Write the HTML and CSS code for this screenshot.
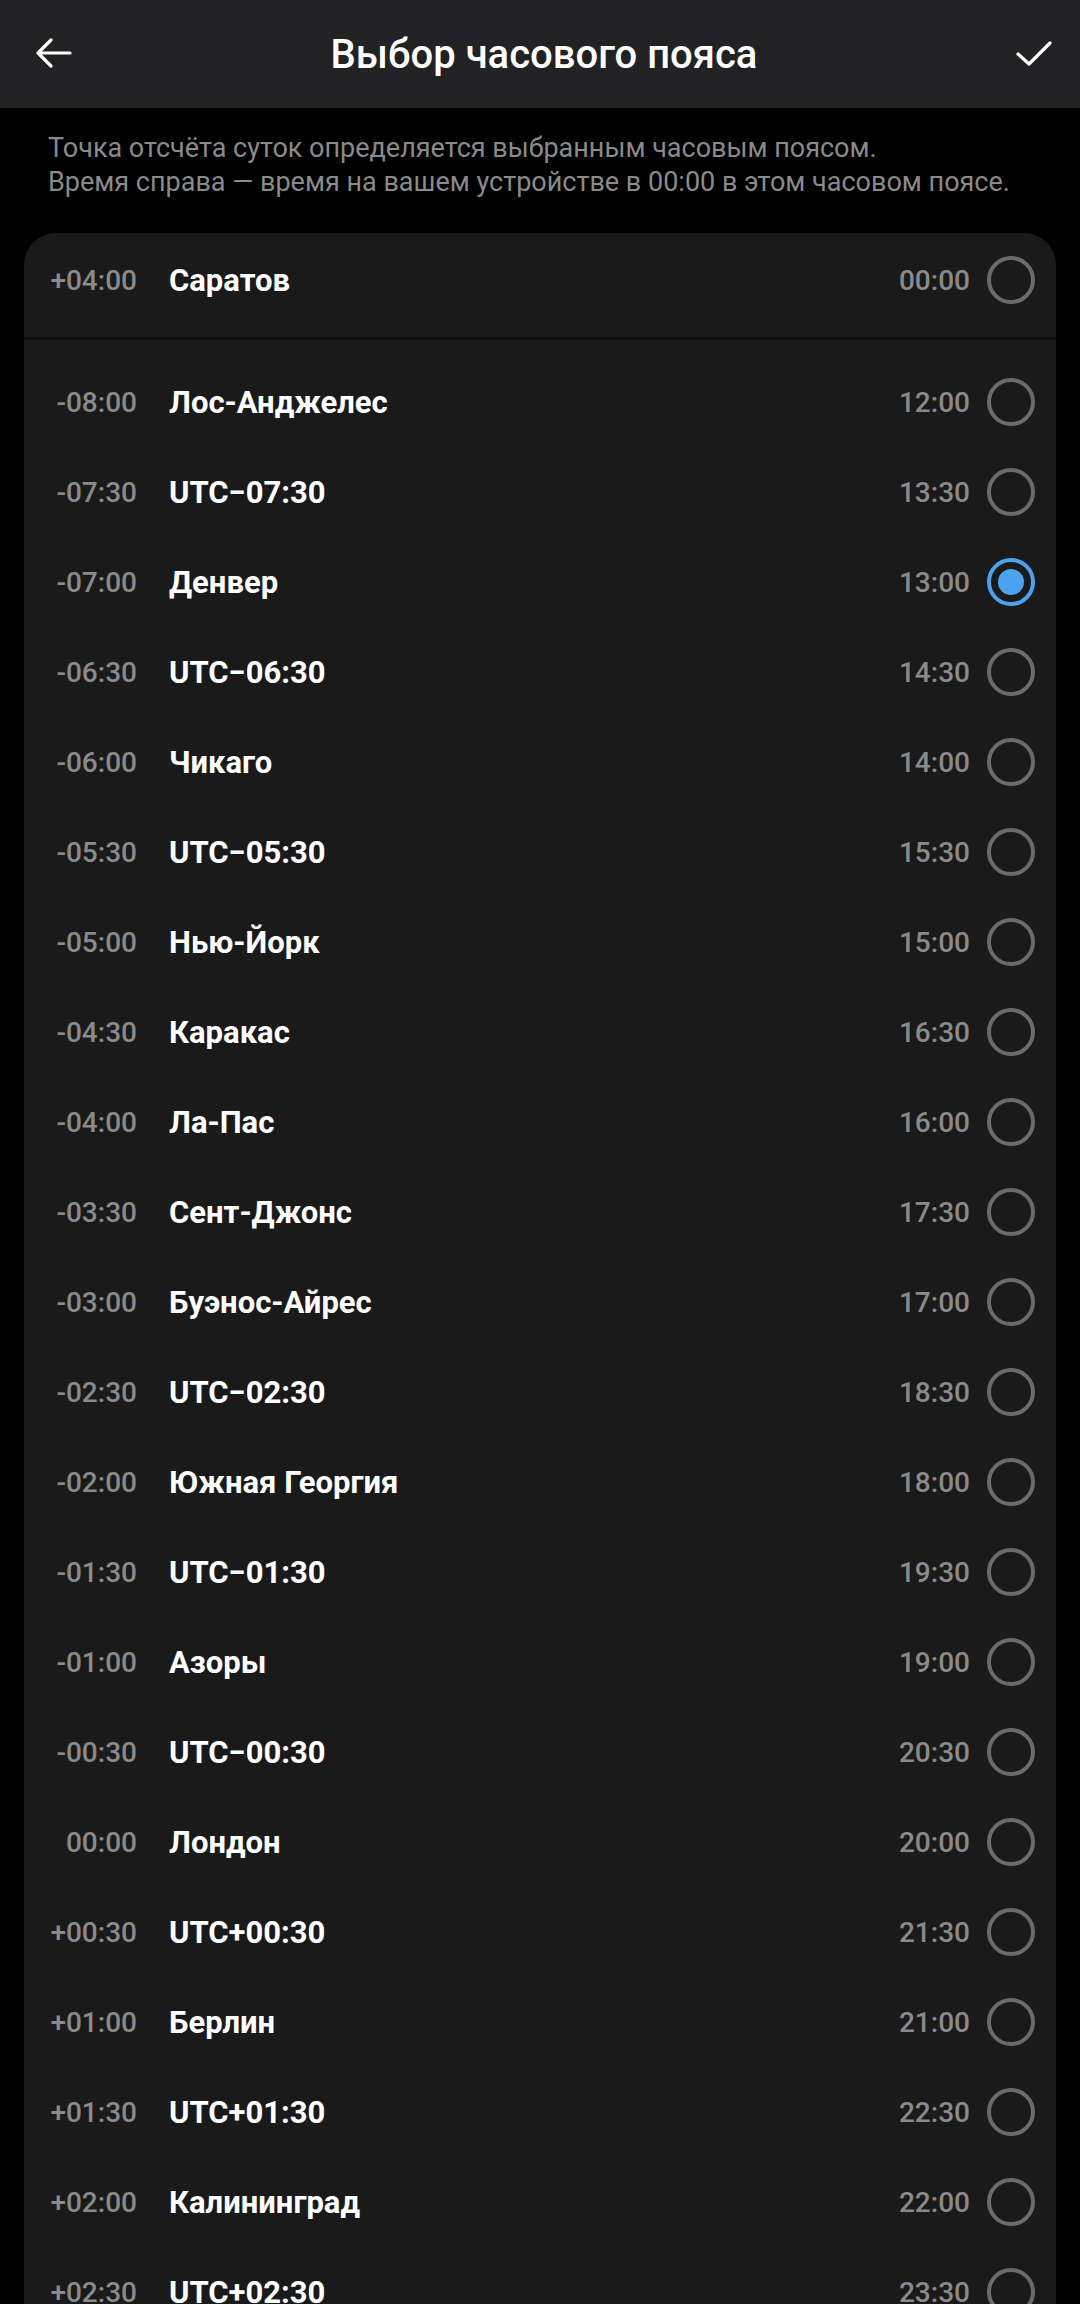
FILE: index.html
```html
<!DOCTYPE html>
<html lang="ru">
<head>
    <meta charset="UTF-8">
    <meta name="viewport" content="width=device-width, initial-scale=1">
    <title>Выбор часового пояса</title>
    <link rel="stylesheet" href="styles.css">
</head>
<body>
    <header class="topbar">
        <button class="icon-btn" aria-label="Назад">
            <svg width="40" height="40" viewBox="0 0 40 40"><path d="M36 20H4M17 7L4 20l13 13" fill="none" stroke="#fff" stroke-width="3.2" stroke-linecap="round" stroke-linejoin="round"/></svg>
        </button>
        <h1>Выбор часового пояса</h1>
        <button class="icon-btn" aria-label="Готово">
            <svg width="40" height="40" viewBox="0 0 40 40"><path d="M4 21l11 10L36 10" fill="none" stroke="#fff" stroke-width="3.2" stroke-linecap="round" stroke-linejoin="round"/></svg>
        </button>
    </header>

    <p class="hint">Точка отсчёта суток определяется выбранным часовым поясом.<br>Время справа — время на вашем устройстве в 00:00 в этом часовом поясе.</p>

    <div class="card">
        <div class="group" id="current"></div>
        <div class="divider"></div>
        <div class="group" id="zones"></div>
    </div>

    <script>
        const current = [
            { offset: "+04:00", name: "Саратов", time: "00:00" }
        ];

        const zones = [
            { offset: "-08:00", name: "Лос-Анджелес", time: "12:00" },
            { offset: "-07:30", name: "UTC−07:30", time: "13:30" },
            { offset: "-07:00", name: "Денвер", time: "13:00", checked: true },
            { offset: "-06:30", name: "UTC−06:30", time: "14:30" },
            { offset: "-06:00", name: "Чикаго", time: "14:00" },
            { offset: "-05:30", name: "UTC−05:30", time: "15:30" },
            { offset: "-05:00", name: "Нью-Йорк", time: "15:00" },
            { offset: "-04:30", name: "Каракас", time: "16:30" },
            { offset: "-04:00", name: "Ла-Пас", time: "16:00" },
            { offset: "-03:30", name: "Сент-Джонс", time: "17:30" },
            { offset: "-03:00", name: "Буэнос-Айрес", time: "17:00" },
            { offset: "-02:30", name: "UTC−02:30", time: "18:30" },
            { offset: "-02:00", name: "Южная Георгия", time: "18:00" },
            { offset: "-01:30", name: "UTC−01:30", time: "19:30" },
            { offset: "-01:00", name: "Азоры", time: "19:00" },
            { offset: "-00:30", name: "UTC−00:30", time: "20:30" },
            { offset: "00:00", name: "Лондон", time: "20:00" },
            { offset: "+00:30", name: "UTC+00:30", time: "21:30" },
            { offset: "+01:00", name: "Берлин", time: "21:00" },
            { offset: "+01:30", name: "UTC+01:30", time: "22:30" },
            { offset: "+02:00", name: "Калининград", time: "22:00" },
            { offset: "+02:30", name: "UTC+02:30", time: "23:30" }
        ];

        function renderRows(list, target) {
            const box = document.getElementById(target);
            list.forEach(z => {
                box.innerHTML += `<div class="row">
                    <span class="offset">${z.offset}</span>
                    <span class="name">${z.name}</span>
                    <span class="time">${z.time}</span>
                    <span class="radio${z.checked ? " checked" : ""}"></span>
                </div>`;
            });
        }

        renderRows(current, "current");
        renderRows(zones, "zones");
    </script>
</body>
</html>
```

FILE: styles.css
```css
body {
    margin: 0;
    background: #000;
    color: #fff;
    font-family: Roboto, "Noto Sans", Arial, sans-serif;
    height: 2304px;
    overflow: hidden;
}

.topbar {
    height: 108px;
    background: #222224;
    display: flex;
    align-items: center;
    justify-content: space-between;
    padding: 0 26px 0 34px;
}

.topbar h1 {
    margin: 0;
    font-size: 40px;
    font-weight: 500;
    color: #fff;
}

.icon-btn {
    background: none;
    border: none;
    padding: 0;
    width: 40px;
    height: 40px;
    display: flex;
    align-items: center;
    justify-content: center;
    margin-top: -2px;
}

.hint {
    margin: 0;
    padding: 23px 30px 34px 48px;
    font-size: 27px;
    line-height: 34px;
    color: #8a8a8a;
}

.card {
    margin: 0 24px;
    background: #1a1a1a;
    border-radius: 32px 32px 0 0;
    padding-top: 2px;
}

.divider {
    height: 3px;
    background: #111;
    margin: 12px 0 17px;
}

.row {
    height: 90px;
    display: flex;
    align-items: center;
    padding: 0 21px 0 24px;
}

.offset {
    width: 89px;
    text-align: right;
    font-size: 28px;
    font-weight: 500;
    color: #8a8a8a;
}

.name {
    flex: 1;
    margin-left: 32px;
    font-size: 31px;
    font-weight: 700;
    color: #fff;
}

.time {
    font-size: 28px;
    font-weight: 500;
    color: #8a8a8a;
    margin-right: 17px;
}

.radio {
    width: 48px;
    height: 48px;
    box-sizing: border-box;
    border: 4px solid #6b6b6b;
    border-radius: 50%;
    display: flex;
    align-items: center;
    justify-content: center;
}

.radio.checked {
    border-color: #4ba3ef;
}

.radio.checked::after {
    content: "";
    width: 26px;
    height: 26px;
    border-radius: 50%;
    background: #4ba3ef;
}
```
